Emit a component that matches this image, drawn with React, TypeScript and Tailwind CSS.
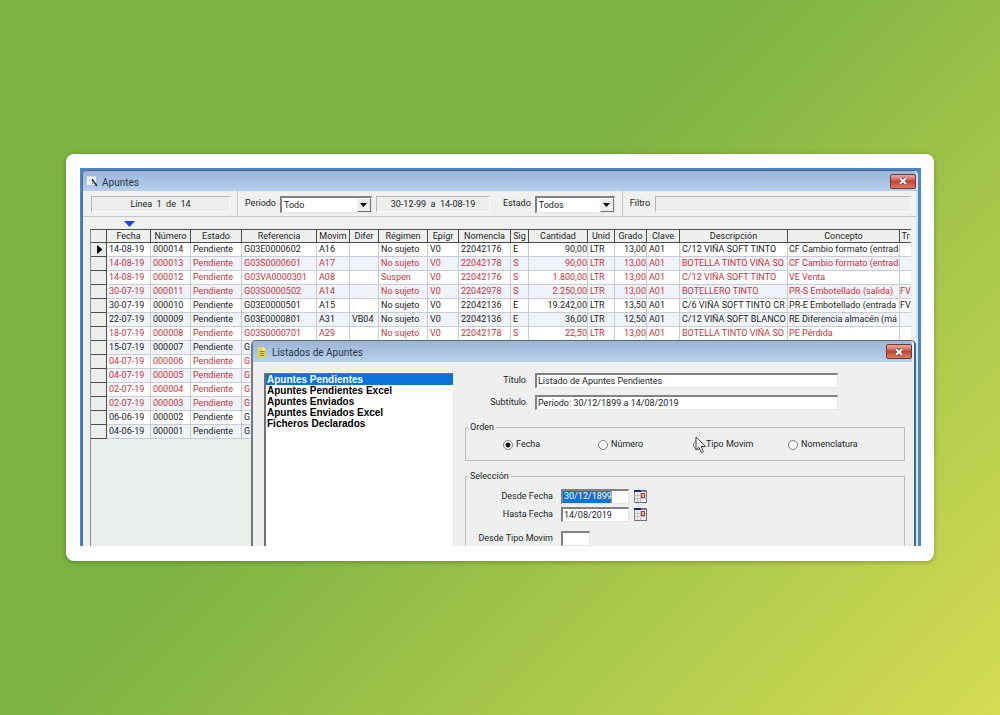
import React from "react";

type Row = {
  fecha: string;
  numero: string;
  ref: string;
  movim?: string;
  difer?: string;
  regimen?: string;
  nomencla?: string;
  sig?: string;
  cantidad?: string;
  grado?: string;
  descripcion?: string;
  concepto?: string;
  tr?: string;
  red?: boolean;
};

const rows: Row[] = [
  { fecha: "14-08-19", numero: "000014", ref: "G03E0000602", movim: "A16", regimen: "No sujeto", nomencla: "22042176", sig: "E", cantidad: "90,00", grado: "13,00", descripcion: "C/12 VIÑA SOFT TINTO", concepto: "CF Cambio formato (entrada" },
  { fecha: "14-08-19", numero: "000013", ref: "G03S0000601", movim: "A17", regimen: "No sujeto", nomencla: "22042178", sig: "S", cantidad: "90,00", grado: "13,00", descripcion: "BOTELLA TINTO VIÑA SO", concepto: "CF Cambio formato (entrada", red: true },
  { fecha: "14-08-19", numero: "000012", ref: "G03VA0000301", movim: "A08", regimen: "Suspen", nomencla: "22042176", sig: "S", cantidad: "1.800,00", grado: "13,00", descripcion: "C/12 VIÑA SOFT TINTO", concepto: "VE Venta", red: true },
  { fecha: "30-07-19", numero: "000011", ref: "G03S0000502", movim: "A14", regimen: "No sujeto", nomencla: "22042978", sig: "S", cantidad: "2.250,00", grado: "13,00", descripcion: "BOTELLERO TINTO", concepto: "PR-S Embotellado (salida)", tr: "FV", red: true },
  { fecha: "30-07-19", numero: "000010", ref: "G03E0000501", movim: "A15", regimen: "No sujeto", nomencla: "22042136", sig: "E", cantidad: "19.242,00", grado: "13,50", descripcion: "C/6 VIÑA SOFT TINTO CR", concepto: "PR-E Embotellado (entrada", tr: "FV" },
  { fecha: "22-07-19", numero: "000009", ref: "G03E0000801", movim: "A31", difer: "VB04", regimen: "No sujeto", nomencla: "22042136", sig: "E", cantidad: "36,00", grado: "12,50", descripcion: "C/12 VIÑA SOFT BLANCO", concepto: "RE Diferencia almacén (má" },
  { fecha: "18-07-19", numero: "000008", ref: "G03S0000701", movim: "A29", regimen: "No sujeto", nomencla: "22042178", sig: "S", cantidad: "22,50", grado: "13,00", descripcion: "BOTELLA TINTO VIÑA SO", concepto: "PE Pérdida", red: true },
  { fecha: "15-07-19", numero: "000007", ref: "G" },
  { fecha: "04-07-19", numero: "000006", ref: "G", red: true },
  { fecha: "04-07-19", numero: "000005", ref: "G", red: true },
  { fecha: "02-07-19", numero: "000004", ref: "G", red: true },
  { fecha: "02-07-19", numero: "000003", ref: "G", red: true },
  { fecha: "06-06-19", numero: "000002", ref: "G" },
  { fecha: "04-06-19", numero: "000001", ref: "G" },
];

const headers = ["Fecha", "Número", "Estado", "Referencia", "Movim", "Difer", "Régimen", "Epígr", "Nomencla", "Sig", "Cantidad", "Unid", "Grado", "Clave", "Descripción", "Concepto", "Tr"];

const sunken = "border border-t-[#b4b7b5] border-l-[#b4b7b5] border-r-[#fafbfa] border-b-[#fafbfa] bg-[#ebeeeb]";
const field = "border-t-2 border-l-2 border-t-[#808281] border-l-[#808281] border-r border-b border-r-[#e3e6e4] border-b-[#e3e6e4] bg-white";

function CloseButton() {
  return (
    <button
      type="button"
      aria-label="Cerrar"
      className="flex h-[15px] w-[26px] items-center justify-center rounded-[2px] border border-[#6d3a3c] bg-linear-to-b from-[#e3a097] from-10% via-[#c8432c] via-50% to-[#dd7a5f]"
    >
      <svg width="10" height="8" viewBox="0 0 10 8">
        <path d="M2 1.2 8 6.8M8 1.2 2 6.8" stroke="#5f4548" strokeWidth="3.4" />
        <path d="M2 1.2 8 6.8M8 1.2 2 6.8" stroke="#fff" strokeWidth="2" />
      </svg>
    </button>
  );
}

function Combo({ label, value, width }: { label: string; value: string; width: string }) {
  return (
    <label className="flex items-center gap-[4px]">
      <span>{label}</span>
      <span className={"relative block h-[17px] " + width + " " + field}>
        <select defaultValue={value} className="block h-full w-full appearance-none bg-transparent pl-[2px] leading-[14px] outline-none">
          <option>{value}</option>
        </select>
        <span className="pointer-events-none absolute top-0 right-0 flex h-[14px] w-[14px] items-center justify-center border border-t-[#f6f6f6] border-l-[#f6f6f6] border-r-[#6f7170] border-b-[#6f7170] bg-[#eceeec]">
          <svg width="7" height="4" viewBox="0 0 7 4">
            <path d="M0 0H7L3.5 4Z" fill="#000" />
          </svg>
        </span>
      </span>
    </label>
  );
}

function CalendarButton({ label }: { label: string }) {
  return (
    <button type="button" aria-label={label} className="h-[13px] w-[13px]">
      <svg width="13" height="13" viewBox="0 0 13 13">
        <rect x="0.5" y="0.5" width="12" height="12" fill="#eeeef0" stroke="#8a8588" />
        <rect x="0" y="0" width="7" height="2" fill="#20208c" />
        <rect x="7" y="0" width="5" height="2" fill="#75708c" />
        <path d="M3.5 3V12M6.5 3V12M1 5.5H12M1 8.5H12" stroke="#c3c1c6" />
        <rect x="7.5" y="3.5" width="3" height="4" fill="#e9b5ac" stroke="#963a3a" />
        <path d="M12.5 1V12.5H1" stroke="#77686a" fill="none" />
      </svg>
    </button>
  );
}

function ApuntesTable() {
  return (
    <table className="w-full table-fixed border-separate border-spacing-0 bg-white text-left">
      <colgroup>
        <col className="w-[16px]" />
        <col className="w-[44px]" />
        <col className="w-[40px]" />
        <col className="w-[51px]" />
        <col className="w-[75px]" />
        <col className="w-[33px]" />
        <col className="w-[29px]" />
        <col className="w-[49px]" />
        <col className="w-[31px]" />
        <col className="w-[52px]" />
        <col className="w-[18px]" />
        <col className="w-[59px]" />
        <col className="w-[27px]" />
        <col className="w-[32px]" />
        <col className="w-[33px]" />
        <col className="w-[108px]" />
        <col className="w-[112px]" />
        <col />
      </colgroup>
      <thead>
        <tr className="h-[13px] bg-[#eef0ee]">
          <th className="border-r border-b border-[#4c4e4d] p-0" aria-label="Selector" />
          {headers.map((h) => (
            <th key={h} className="border-r border-b border-[#4c4e4d] p-0 text-center leading-[12px] font-normal whitespace-nowrap last:border-r-0">
              {h}
            </th>
          ))}
        </tr>
      </thead>
      <tbody>
        {rows.map((r, i) => {
          const cells = [r.fecha, r.numero, "Pendiente", r.ref, r.movim, r.difer, r.regimen, r.movim && "V0", r.nomencla, r.sig, r.cantidad, r.movim && "LTR", r.grado, r.movim && "A01", r.descripcion, r.concepto, r.tr];
          return (
            <tr key={r.numero} className={"h-[14px] " + (r.red ? "text-[#c8323c] " : "text-[#1c1c1e] ") + (i % 2 ? "bg-[#f0f4fa]" : "bg-white")}>
              <th className="border-r border-b border-[#4c4e4d] bg-[#eceeec] p-0">
                {i === 0 && (
                  <svg className="ml-[6px] block" width="6" height="9" viewBox="0 0 6 9">
                    <path d="M0 0 5.5 4.5 0 9Z" fill="#000" />
                  </svg>
                )}
              </th>
              {cells.map((c, j) => (
                <td
                  key={headers[j]}
                  className={
                    "overflow-hidden border-r border-b border-[#c9ccd0] p-0 leading-[13px] whitespace-nowrap last:border-r-0 last:pl-0 " +
                    (j === 10 || j === 12 ? "text-right" : j === 15 ? "pl-px" : "pl-[2px]")
                  }
                >
                  {c}
                </td>
              ))}
            </tr>
          );
        })}
      </tbody>
    </table>
  );
}

function Dialog() {
  const items = ["Apuntes Pendientes", "Apuntes Pendientes Excel", "Apuntes Enviados", "Apuntes Enviados Excel", "Ficheros Declarados"];
  const orders = ["Fecha", "Número", "Tipo Movim", "Nomenclatura"];
  return (
    <section className="absolute top-[172px] right-[5px] bottom-0 left-[171px] flex flex-col rounded-t-[5px] border-t border-r-2 border-l-2 border-t-[#5d6976] border-r-[#55636c] border-l-[#75797c] bg-[#eef0ef]">
      <header className="flex h-[21px] items-center rounded-t-[4px] border-r-2 border-[#d9f0f8] bg-linear-to-b from-[#9cb5d4] to-[#b9d0ee] pl-[5px]">
        <svg width="8" height="10" viewBox="0 0 8 10">
          <path d="M0 0H5L8 3V10H0Z" fill="#e8d35c" />
          <path d="M5 0V3H8" fill="#fff6b8" />
          <path d="M1.5 4.5H6.5M1.5 6.5H6.5M1.5 8.5H6.5" stroke="#8c8034" />
        </svg>
        <h2 className="ml-[6px] flex-1 pt-px text-[10px] text-[#26364a]">Listados de Apuntes</h2>
        <CloseButton />
      </header>
      <div className="flex min-h-0 flex-1 border-r-2 border-[#e6f0f2] pt-[11px] pl-[11px]">
        <ul className="w-[189px] shrink-0 border-t border-l-2 border-t-[#6d7274] border-l-[#6d7274] bg-white font-[Liberation_Sans,Arial,sans-serif] text-[10px] leading-[11px] font-bold text-black">
          {items.map((t, i) => (
            <li key={t} className={i === 0 ? "bg-[#0a74d6] pl-px text-white" : "pl-px"}>
              {t}
            </li>
          ))}
        </ul>
        <form className="min-w-0 flex-1 pr-[7px] pl-[12px]">
          <div className="grid grid-cols-[61px_303px] gap-x-[9px] gap-y-[7px]">
            <label htmlFor="titulo" className="text-right leading-[15px]">Título</label>
            <input id="titulo" defaultValue="Listado de Apuntes Pendientes" className={"h-[15px] px-px " + field} />
            <label htmlFor="subtitulo" className="text-right leading-[15px]">Subtítulo</label>
            <input id="subtitulo" defaultValue="Periodo: 30/12/1899 a 14/08/2019" className={"h-[15px] px-px " + field} />
          </div>
          <fieldset className="mt-[11px] h-[40px] border border-[#bcbfbd] pl-[2px]">
            <legend className="px-[2px] leading-[13px]">Orden</legend>
            <div className="flex pt-[4px] pl-[35px]">
              {orders.map((o, i) => (
                <label key={o} className="flex w-[95px] shrink-0 items-center gap-[3px] leading-[13px] whitespace-nowrap">
                  <input
                    type="radio"
                    name="orden"
                    defaultChecked={i === 0}
                    className="h-[10px] w-[10px] appearance-none rounded-full border border-[#7d807f] bg-white checked:bg-[radial-gradient(circle,#1a1a1a_0_2px,#fff_3px)]"
                  />
                  {o}
                </label>
              ))}
            </div>
          </fieldset>
          <fieldset className="mt-[9px] h-[120px] border border-b-0 border-[#bcbfbd] pl-[2px]">
            <legend className="px-[2px] leading-[13px]">Selección</legend>
            <div className="grid grid-cols-[85px_auto] gap-x-[8px] gap-y-[3px] pt-[6px]">
              <label htmlFor="desde" className="text-right leading-[15px]">Desde Fecha</label>
              <div className="flex items-center gap-[5px]">
                <span className={"flex h-[15px] w-[68px] items-center " + field}>
                  <input id="desde" defaultValue="30/12/1899" className="h-[12px] w-[49px] border-r border-[#e0913c] bg-[#0a74d6] pl-px text-white outline-none" />
                </span>
                <CalendarButton label="Elegir desde fecha" />
              </div>
              <label htmlFor="hasta" className="text-right leading-[15px]">Hasta Fecha</label>
              <div className="flex items-center gap-[5px]">
                <input id="hasta" defaultValue="14/08/2019" className={"h-[15px] w-[68px] pl-px outline-none " + field} />
                <CalendarButton label="Elegir hasta fecha" />
              </div>
              <label htmlFor="tipo" className="mt-[6px] text-right leading-[15px] whitespace-nowrap">Desde Tipo Movim</label>
              <input id="tipo" className={"mt-[6px] h-[15px] w-[29px] outline-none " + field} />
            </div>
          </fieldset>
        </form>
      </div>
      <svg className="absolute top-[95px] left-[442px]" width="12" height="18" viewBox="0 0 12 18">
        <path d="M1 1V14L4 11.3 6.2 16.6 8.4 15.6 6.2 10.5H10.4Z" fill="#fff" stroke="#3c3f40" />
      </svg>
    </section>
  );
}

export default function App() {
  return (
    <main className="flex min-h-screen items-center bg-[linear-gradient(135deg,#7cb342_43%,#d6dc54)] px-[66px] font-[Roboto,Arial,sans-serif] text-[9px] text-[#1c1c1e]">
      <div className="min-w-0 flex-1 rounded-[8px] bg-white pt-[14px] pr-[13px] pb-[15px] pl-[14px] shadow-[0_1px_5px_rgba(0,0,0,0.3)]">
        <div className="relative h-[378px] overflow-hidden bg-[#4a86cc] pt-[2px] pr-[3px] pl-[2px]">
          <section className="flex h-full flex-col rounded-t-[5px] border-t border-r-2 border-l border-t-[#4d6076] border-r-[#cfe4f4] border-l-[#56687f] bg-[#eff1ef]">
            <header className="flex h-[20px] shrink-0 items-center rounded-t-[4px] bg-linear-to-b from-[#9bb5d8] to-[#b8cfee] pl-[4px]">
              <svg width="12" height="11" viewBox="0 0 12 11">
                <rect x="0" y="0.5" width="9" height="8.5" fill="#f5f9fc" />
                <path d="M1 3H8M1 5H6" stroke="#c7d8e8" />
                <path d="M5 3.5 10 10" stroke="#27384e" strokeWidth="2" />
                <path d="M5 8.5 6.5 6" stroke="#6b8198" />
              </svg>
              <h1 className="ml-[3px] flex-1 pt-[2px] text-[10px] text-[#26364a]">Apuntes</h1>
              <CloseButton />
            </header>
            <div className="flex h-[26px] shrink-0 items-stretch border-b border-[#c3c6c4]">
              <div className="flex items-center border-r border-[#c3c6c4] pr-[7px] pl-[8px]">
                <span className={"h-[16px] w-[139px] text-center leading-[15px] " + sunken}>Línea&nbsp; 1&nbsp; de&nbsp; 14</span>
              </div>
              <div className="flex items-center border-r border-[#c3c6c4] pt-px pr-[7px] pl-[7px]">
                <Combo label="Periodo" value="Todo" width="w-[92px]" />
                <span className={"mr-[13px] ml-[4px] h-[16px] w-[114px] text-center leading-[15px] " + sunken}>30-12-99&nbsp; a&nbsp; 14-08-19</span>
                <Combo label="Estado" value="Todos" width="w-[80px]" />
              </div>
              <label className="flex flex-1 items-center gap-[5px] pr-[5px] pl-[7px]">
                Filtro
                <input className={"h-[16px] min-w-0 flex-1 outline-none " + sunken} />
              </label>
            </div>
            <div className="flex h-[12px] shrink-0 items-end pb-[2px] pl-[41px]">
              <svg width="11" height="6" viewBox="0 0 11 6">
                <path d="M0 0H11L5.5 6Z" fill="#1c4bc4" />
              </svg>
            </div>
            <div className="mr-[5px] ml-[7px] min-h-0 flex-1 overflow-hidden border-t border-l border-t-[#4c4e4d] border-l-[#8b8f8d] bg-[#ebefeb]">
              <ApuntesTable />
            </div>
          </section>
          <Dialog />
        </div>
      </div>
    </main>
  );
}
